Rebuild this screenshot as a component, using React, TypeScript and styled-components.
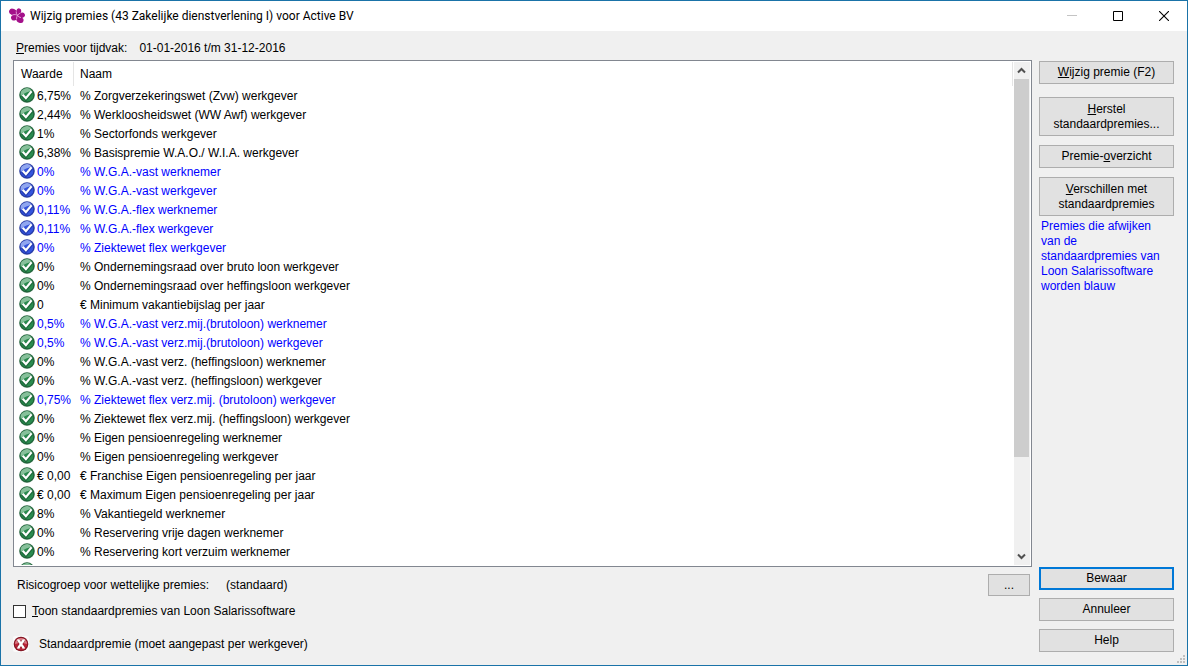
import React from 'react';
import styled, { createGlobalStyle } from 'styled-components';

const GlobalStyle = createGlobalStyle`
  *, *::before, *::after { box-sizing: border-box; }
  html, body { margin: 0; padding: 0; }
  body, button, input {
    font-family: "Liberation Sans", Arial, sans-serif;
    font-size: 12px;
    line-height: 15px;
    color: #000;
  }
`;

const Window = styled.div`
  position: relative;
  display: flex;
  flex-direction: column;
  height: 100vh;
  border: 1px solid #1a73a8;
  background: #f0f0f0;
`;

const TitleBar = styled.header`
  display: flex;
  align-items: center;
  flex: none;
  height: 30px;
  padding-left: 8px;
  background: #fff;
`;

const Title = styled.h1`
  flex: 1;
  margin: 0 0 0 5px;
  font-family: Roboto, "Segoe UI", sans-serif;
  font-size: 12px;
  font-weight: 400;
  line-height: 16px;
  white-space: nowrap;
`;

const CaptionButton = styled.button`
  display: flex;
  align-items: center;
  justify-content: center;
  width: 46px;
  height: 30px;
  padding: 0;
  border: 0;
  background: transparent;
`;

const Body = styled.div`
  display: flex;
  flex: 1;
  gap: 7px;
  min-height: 0;
  padding: 9px 13px 13px 12px;
`;

const Main = styled.main`
  display: flex;
  flex: 1;
  flex-direction: column;
  min-width: 0;
`;

const Period = styled.div`
  display: flex;
  gap: 12px;
  flex: none;
  height: 20px;
  padding: 1px 0 0 3px;
`;

const ListBox = styled.div`
  display: flex;
  flex: 1;
  gap: 1px;
  min-height: 0;
  padding: 1px;
  border: 1px solid #828790;
  background: #fff;
`;

const ListView = styled.div`
  flex: 1;
  min-width: 0;
  overflow: hidden;
`;

const Table = styled.table`
  width: 100%;
  border-collapse: separate;
  border-spacing: 0;
  table-layout: fixed;
`;

const HeadCell = styled.th<{ $width?: number }>`
  width: ${(p) => (p.$width ? `${p.$width}px` : 'auto')};
  height: 24px;
  padding: 0 6px;
  border-right: 1px solid #e5e5e5;
  font-weight: 400;
  text-align: left;
`;

const Row = styled.tr<{ $changed: boolean }>`
  color: ${(p) => (p.$changed ? '#0000ff' : '#000')};
`;

const Cell = styled.td`
  height: 19px;
  padding: 2px 0 0 6px;
  line-height: 17px;
  vertical-align: top;
  white-space: nowrap;
`;

const ValueCell = styled(Cell)`
  padding: 1px 0 0 4px;
`;

const Value = styled.div`
  display: flex;
  gap: 2px;
  height: 18px;
  line-height: 19px;
`;

const ScrollBar = styled.div`
  display: flex;
  flex: none;
  flex-direction: column;
  width: 16px;
  padding-right: 1px;
  background: #f0f0f0;
`;

const ScrollButton = styled.button`
  display: flex;
  align-items: center;
  justify-content: center;
  flex: none;
  height: 17px;
  padding: 0;
  border: 0;
  background: #f0f0f0;
`;

const Track = styled.div`
  flex: 1;
`;

const Thumb = styled.div`
  height: 80.5%;
  background: #cdcdcd;
`;

const RiskRow = styled.div`
  display: flex;
  align-items: center;
  flex: none;
  gap: 17px;
  margin: 7px 2px 8px 4px;
`;

const CheckLabel = styled.label`
  display: flex;
  align-items: center;
  align-self: flex-start;
  flex: none;
  gap: 6px;
  height: 15px;
`;

const CheckBox = styled.input`
  appearance: none;
  width: 13px;
  height: 13px;
  margin: 0;
  border: 1px solid #333;
  background: #fff;
`;

const Legend = styled.div`
  display: flex;
  align-items: center;
  flex: none;
  gap: 10px;
  height: 16px;
  margin-top: 17px;
`;

const Side = styled.aside`
  display: flex;
  flex: none;
  flex-direction: column;
  width: 135px;
  padding-top: 21px;
`;

const Button = styled.button<{ $primary?: boolean }>`
  flex: none;
  width: 100%;
  min-height: 23px;
  padding: 2px 6px;
  border: ${(p) => (p.$primary ? '2px solid #0078d7' : '1px solid #adadad')};
  background: #e1e1e1;
  text-align: center;
`;

const TallButton = styled(Button)`
  min-height: 39px;
`;

const BrowseButton = styled(Button)`
  width: 42px;
  min-height: 22px;
  margin-left: auto;
`;

const Group = styled.div<{ $gap: number }>`
  display: flex;
  flex-direction: column;
  gap: ${(p) => p.$gap}px;
`;

const Actions = styled(Group)`
  margin-top: auto;
`;

const Tools = styled(Group)`
  margin-top: 13px;
`;

const Hint = styled.p`
  margin: 3px 0 0;
  padding: 0 8px 0 2px;
  color: #0000ff;
`;

const Grip = styled.svg`
  position: absolute;
  right: 2px;
  bottom: 2px;
`;

const CheckIcon = ({ blue }: { blue: boolean }) => {
  const dark = blue ? '#14248c' : '#0f4a26';
  const mid = blue ? '#3454dc' : '#2a8a4e';
  const light = blue ? '#90a6f0' : '#86c09a';
  return (
    <svg width="16" height="16" viewBox="0 0 16 16" aria-hidden="true">
      <circle cx="8" cy="8" r="7.8" fill={blue ? '#6c7cc0' : '#6a9a7c'} />
      <circle cx="8" cy="8" r="7" fill={mid} stroke={dark} strokeWidth="0.8" />
      <path d="M1.9 9A6.1 6.1 0 0 1 13 4.2C9.6 4.2 5 6 1.9 9Z" fill={light} />
      <path d="M3.4 8.4L6.8 12L13 4.6" fill="none" stroke={dark} strokeWidth="3.4" opacity="0.55" />
      <path d="M3.7 7.8L6.9 11.2L12.6 4.2" fill="none" stroke="#fff" strokeWidth="2.2" />
    </svg>
  );
};

const ErrorIcon = () => (
  <svg width="16" height="16" viewBox="0 0 16 16" aria-hidden="true">
    <rect width="16" height="16" rx="2" fill="#fafafa" />
    <circle cx="8" cy="8" r="7.3" fill="#7c1420" />
    <circle cx="8" cy="8" r="6.3" fill="#bc2438" />
    <path d="M2 8A6 6 0 0 1 14 8C10 6.6 6 6.6 2 8Z" fill="#dc7e88" />
    <path d="M5 4L11 12M11 4L5 12" stroke="#5c0c18" strokeWidth="3.6" opacity="0.5" />
    <path d="M5.2 4L10.8 12M10.8 4L5.2 12" stroke="#fff" strokeWidth="2.2" />
    <path d="M4 4H6.6M9.4 4H12M4 12H6.6M9.4 12H12" stroke="#fff" />
  </svg>
);

const Logo = () => (
  <svg width="16" height="16" viewBox="0 0 16 16" aria-hidden="true">
    <g fill="#a4108a">
      <ellipse cx="3.8" cy="3.9" rx="3.8" ry="3.1" transform="rotate(25 3.8 3.9)" />
      <ellipse cx="9.6" cy="3.6" rx="2.5" ry="3.3" transform="rotate(15 9.6 3.6)" />
      <ellipse cx="12.9" cy="7.2" rx="3.1" ry="2.6" transform="rotate(-20 12.9 7.2)" />
      <ellipse cx="11" cy="12" rx="3.6" ry="2.9" transform="rotate(20 11 12)" />
      <ellipse cx="5.2" cy="9.6" rx="3.2" ry="2.8" transform="rotate(-25 5.2 9.6)" />
      <circle cx="8.2" cy="7.6" r="2.6" />
    </g>
    <g fill="none" stroke="#eeb6e4" strokeWidth="0.8">
      <path d="M7.2 3.4Q7 6 8.6 7.4M11.4 5Q9.4 5.8 8.6 7.4M12 9.6Q9.6 9.4 8.6 7.4M7.6 11Q7.4 8.8 8.6 7.4M3.4 6.8Q6.4 6 8.6 7.4" />
    </g>
  </svg>
);

const Chevron = ({ down }: { down?: boolean }) => (
  <svg width="9" height="7" viewBox="0 0 9 7" aria-hidden="true">
    <path
      d={down ? 'M1 1.5L4.5 5L8 1.5' : 'M1 5.5L4.5 2L8 5.5'}
      fill="none"
      stroke="#505050"
      strokeWidth="2"
    />
  </svg>
);

type Premium = [value: string, name: string, changed?: boolean];

const premiums: Premium[] = [
  ['6,75%', '% Zorgverzekeringswet (Zvw) werkgever'],
  ['2,44%', '% Werkloosheidswet (WW Awf) werkgever'],
  ['1%', '% Sectorfonds werkgever'],
  ['6,38%', '% Basispremie W.A.O./ W.I.A. werkgever'],
  ['0%', '% W.G.A.-vast werknemer', true],
  ['0%', '% W.G.A.-vast werkgever', true],
  ['0,11%', '% W.G.A.-flex werknemer', true],
  ['0,11%', '% W.G.A.-flex werkgever', true],
  ['0%', '% Ziektewet flex werkgever', true],
  ['0%', '% Ondernemingsraad over bruto loon werkgever'],
  ['0%', '% Ondernemingsraad over heffingsloon werkgever'],
  ['0', '€ Minimum vakantiebijslag per jaar'],
  ['0,5%', '% W.G.A.-vast verz.mij.(brutoloon) werknemer', true],
  ['0,5%', '% W.G.A.-vast verz.mij.(brutoloon) werkgever', true],
  ['0%', '% W.G.A.-vast verz. (heffingsloon) werknemer'],
  ['0%', '% W.G.A.-vast verz. (heffingsloon) werkgever'],
  ['0,75%', '% Ziektewet flex verz.mij. (brutoloon) werkgever', true],
  ['0%', '% Ziektewet flex verz.mij. (heffingsloon) werkgever'],
  ['0%', '% Eigen pensioenregeling werknemer'],
  ['0%', '% Eigen pensioenregeling werkgever'],
  ['€ 0,00', '€ Franchise Eigen pensioenregeling per jaar'],
  ['€ 0,00', '€ Maximum Eigen pensioenregeling per jaar'],
  ['8%', '% Vakantiegeld werknemer'],
  ['0%', '% Reservering vrije dagen werknemer'],
  ['0%', '% Reservering kort verzuim werknemer'],
  ['', ''],
];

// Only the statutory premiums that differ get a blue icon; other changed rows keep green.
const hasBlueIcon = (index: number) => index >= 4 && index <= 8;

export default function App() {
  return (
    <Window>
      <GlobalStyle />
      <TitleBar>
        <Logo />
        <Title>Wijzig premies (43 Zakelijke dienstverlening I) voor Active BV</Title>
        <CaptionButton aria-label="Minimaliseren" disabled>
          <svg width="10" height="10" viewBox="0 0 10 10">
            <path d="M0 4.5H10" stroke="#c4c4c4" />
          </svg>
        </CaptionButton>
        <CaptionButton aria-label="Maximaliseren">
          <svg width="10" height="10" viewBox="0 0 10 10">
            <path d="M0.5 0.5H9.5V9.5H0.5Z" fill="none" stroke="#000" />
          </svg>
        </CaptionButton>
        <CaptionButton aria-label="Sluiten">
          <svg width="10" height="10" viewBox="0 0 10 10">
            <path d="M0 0L10 10M10 0L0 10" stroke="#000" strokeWidth="1.1" />
          </svg>
        </CaptionButton>
      </TitleBar>
      <Body>
        <Main>
          <Period>
            <span><u>P</u>remies voor tijdvak:</span>
            <span>01-01-2016 t/m 31-12-2016</span>
          </Period>
          <ListBox>
            <ListView>
              <Table>
                <thead>
                  <tr>
                    <HeadCell $width={59}>Waarde</HeadCell>
                    <HeadCell>Naam</HeadCell>
                  </tr>
                </thead>
                <tbody>
                  {premiums.map(([value, name, changed], i) => (
                    <Row key={i} $changed={!!changed}>
                      <ValueCell>
                        <Value>
                          <CheckIcon blue={hasBlueIcon(i)} />
                          {value}
                        </Value>
                      </ValueCell>
                      <Cell>{name}</Cell>
                    </Row>
                  ))}
                </tbody>
              </Table>
            </ListView>
            <ScrollBar>
              <ScrollButton aria-label="Omhoog"><Chevron /></ScrollButton>
              <Track><Thumb /></Track>
              <ScrollButton aria-label="Omlaag"><Chevron down /></ScrollButton>
            </ScrollBar>
          </ListBox>
          <RiskRow>
            <span>Risicogroep voor wettelijke premies:</span>
            <span>(standaard)</span>
            <BrowseButton aria-label="Risicogroep kiezen">...</BrowseButton>
          </RiskRow>
          <CheckLabel>
            <CheckBox type="checkbox" />
            <span><u>T</u>oon standaardpremies van Loon Salarissoftware</span>
          </CheckLabel>
          <Legend>
            <ErrorIcon />
            <span>Standaardpremie (moet aangepast per werkgever)</span>
          </Legend>
        </Main>
        <Side>
          <Button><u>W</u>ijzig premie (F2)</Button>
          <Tools $gap={9}>
            <TallButton><u>H</u>erstel<br />standaardpremies...</TallButton>
            <Button>Premie-<u>o</u>verzicht</Button>
            <TallButton><u>V</u>erschillen met<br />standaardpremies</TallButton>
          </Tools>
          <Hint>Premies die afwijken van de standaardpremies van Loon Salarissoftware worden blauw</Hint>
          <Actions $gap={8}>
            <Button $primary>Bewaar</Button>
            <Button>Annuleer</Button>
            <Button>Help</Button>
          </Actions>
        </Side>
      </Body>
      <Grip width="8" height="8" viewBox="0 0 8 8" aria-hidden="true">
        <path
          d="M6 0h2v2h-2zM3 3h2v2h-2zM6 3h2v2h-2zM0 6h2v2h-2zM3 6h2v2h-2zM6 6h2v2h-2z"
          fill="#bfbfbf"
        />
      </Grip>
    </Window>
  );
}
